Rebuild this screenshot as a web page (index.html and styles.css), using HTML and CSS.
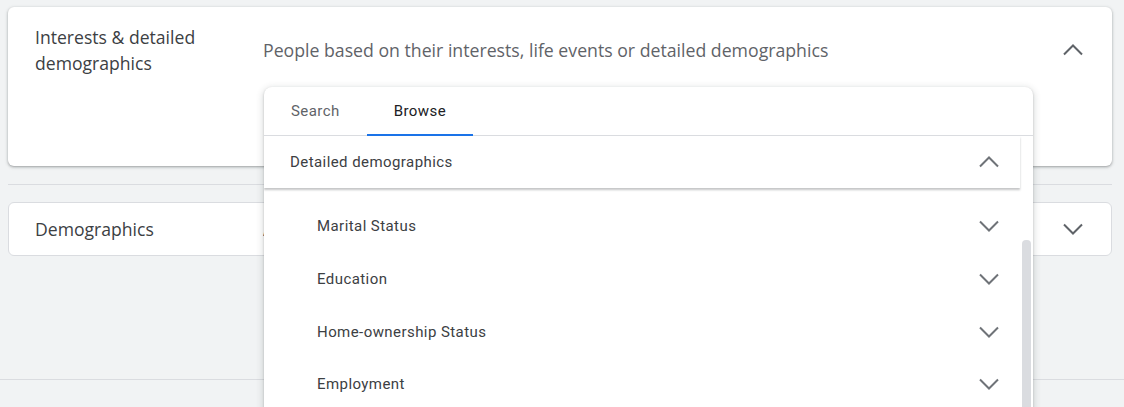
FILE: index.html
```html
<!DOCTYPE html>
<html lang="en">
<head>
<meta charset="utf-8">
<title>Audience segments</title>
<link rel="stylesheet" href="styles.css">
</head>
<body>
<div class="page">
  <section class="card card-open">
    <div class="card-head">
      <div class="card-title">Interests &amp; detailed demographics</div>
      <div class="card-desc">People based on their interests, life events or detailed demographics</div>
      <svg class="chev" viewBox="0 0 24 24"><polyline points="3,16.5 12,7.5 21,16.5"/></svg>
    </div>
  </section>
  <div class="sep"></div>
  <section class="card card-closed">
    <div class="card-head">
      <div class="card-title">Demographics</div>
      <div class="card-desc">Age, gender, parental status and household income</div>
      <svg class="chev" viewBox="0 0 24 24"><polyline points="3,7.5 12,16.5 21,7.5"/></svg>
    </div>
  </section>
</div>
<div class="bottom-line"></div>

<div class="panel">
  <div class="tabs">
    <div class="tab">Search</div>
    <div class="tab tab-active">Browse</div>
  </div>
  <div class="scroll">
    <div class="group-head">
      <span>Detailed demographics</span>
      <svg class="chev chev-sm" viewBox="0 0 24 24"><polyline points="3,16.5 12,7.5 21,16.5"/></svg>
    </div>
    <ul class="list">
      <li class="item"><span>Marital Status</span><svg class="chev chev-sm" viewBox="0 0 24 24"><polyline points="3,7.5 12,16.5 21,7.5"/></svg></li>
      <li class="item"><span>Education</span><svg class="chev chev-sm" viewBox="0 0 24 24"><polyline points="3,7.5 12,16.5 21,7.5"/></svg></li>
      <li class="item"><span>Home-ownership Status</span><svg class="chev chev-sm" viewBox="0 0 24 24"><polyline points="3,7.5 12,16.5 21,7.5"/></svg></li>
      <li class="item"><span>Employment</span><svg class="chev chev-sm" viewBox="0 0 24 24"><polyline points="3,7.5 12,16.5 21,7.5"/></svg></li>
    </ul>
    <div class="thumb"></div>
  </div>
</div>
</body>
</html>
```
FILE: styles.css
```css
* { box-sizing: border-box; }
html, body {
  margin: 0;
  padding: 0;
  background: #f1f3f4;
  overflow: hidden;
  height: 407px;
}
body { position: relative; font-family: "Open Sans", "Liberation Sans", sans-serif; }

.page { padding: 7px 12px 0 8px; }

.card {
  background: #fff;
  border-radius: 6px;
}
.card-open {
  height: 159px;
  padding: 17px 27px 0 27px;
  box-shadow: 0 1px 2px rgba(60,64,67,.3), 0 1px 3px 1px rgba(60,64,67,.15);
}
.card-closed {
  height: 54px;
  padding: 0 26px;
  border: 1px solid #dadce0;
  display: flex;
  align-items: center;
}
.card-head {
  display: flex;
  align-items: center;
  width: 100%;
}
.card-open .card-head { min-height: 52px; }
.card-title {
  width: 228px;
  flex: none;
  font-size: 17.6px;
  line-height: 26px;
  color: #3c4043;
  font-weight: 500;
  padding-right: 20px;
}
.card-desc {
  flex: 1;
  font-size: 17.7px;
  color: #5f6368;
  white-space: nowrap;
  overflow: hidden;
}
.chev {
  width: 24px;
  height: 24px;
  flex: none;
  fill: none;
  stroke: #5f6368;
  stroke-width: 2;
}
.sep {
  height: 1px;
  background: #dadce0;
  margin: 18px 0 17px;
}
.bottom-line {
  height: 1px;
  background: #dadce0;
  margin-top: 123px;
}

.panel {
  position: absolute;
  left: 264px;
  top: 87px;
  width: 769px;
  height: 340px;
  background: #fff;
  border-radius: 8px 8px 0 0;
  box-shadow: 0 1px 2px rgba(60,64,67,.3), 0 2px 6px 2px rgba(60,64,67,.15);
  font-family: Roboto, "Liberation Sans", sans-serif;
  font-size: 15px;
  letter-spacing: .43px;
  overflow: hidden;
}
.tabs {
  display: flex;
  height: 49px;
  border-bottom: 1px solid #dadce0;
}
.tab {
  padding: 1px 27px 0;
  display: flex;
  align-items: center;
  color: #5f6368;
  border-bottom: 2px solid transparent;
  margin-bottom: -1px;
}
.tab-active {
  color: #202124;
  border-bottom-color: #1a73e8;
}
.scroll {
  position: relative;
  padding-right: 13px;
}
.group-head {
  height: 52px;
  display: flex;
  align-items: center;
  justify-content: space-between;
  padding: 0 19px 0 26px;
  color: #3c4043;
  position: relative;
  z-index: 1;
  background: #fff;
  box-shadow: 0 2px 2px rgba(60,64,67,.3);
}
.list {
  list-style: none;
  margin: 0;
  padding: 12px 0 0 0;
}
.item {
  height: 52.67px;
  display: flex;
  align-items: center;
  justify-content: space-between;
  padding: 0 19px 0 53px;
  color: #3c4043;
}
.chev-sm { stroke: #6f7378; }
.thumb {
  position: absolute;
  left: 758px;
  top: 104px;
  width: 8.5px;
  height: 260px;
  border-radius: 4px;
  background: #dadce0;
}
```
